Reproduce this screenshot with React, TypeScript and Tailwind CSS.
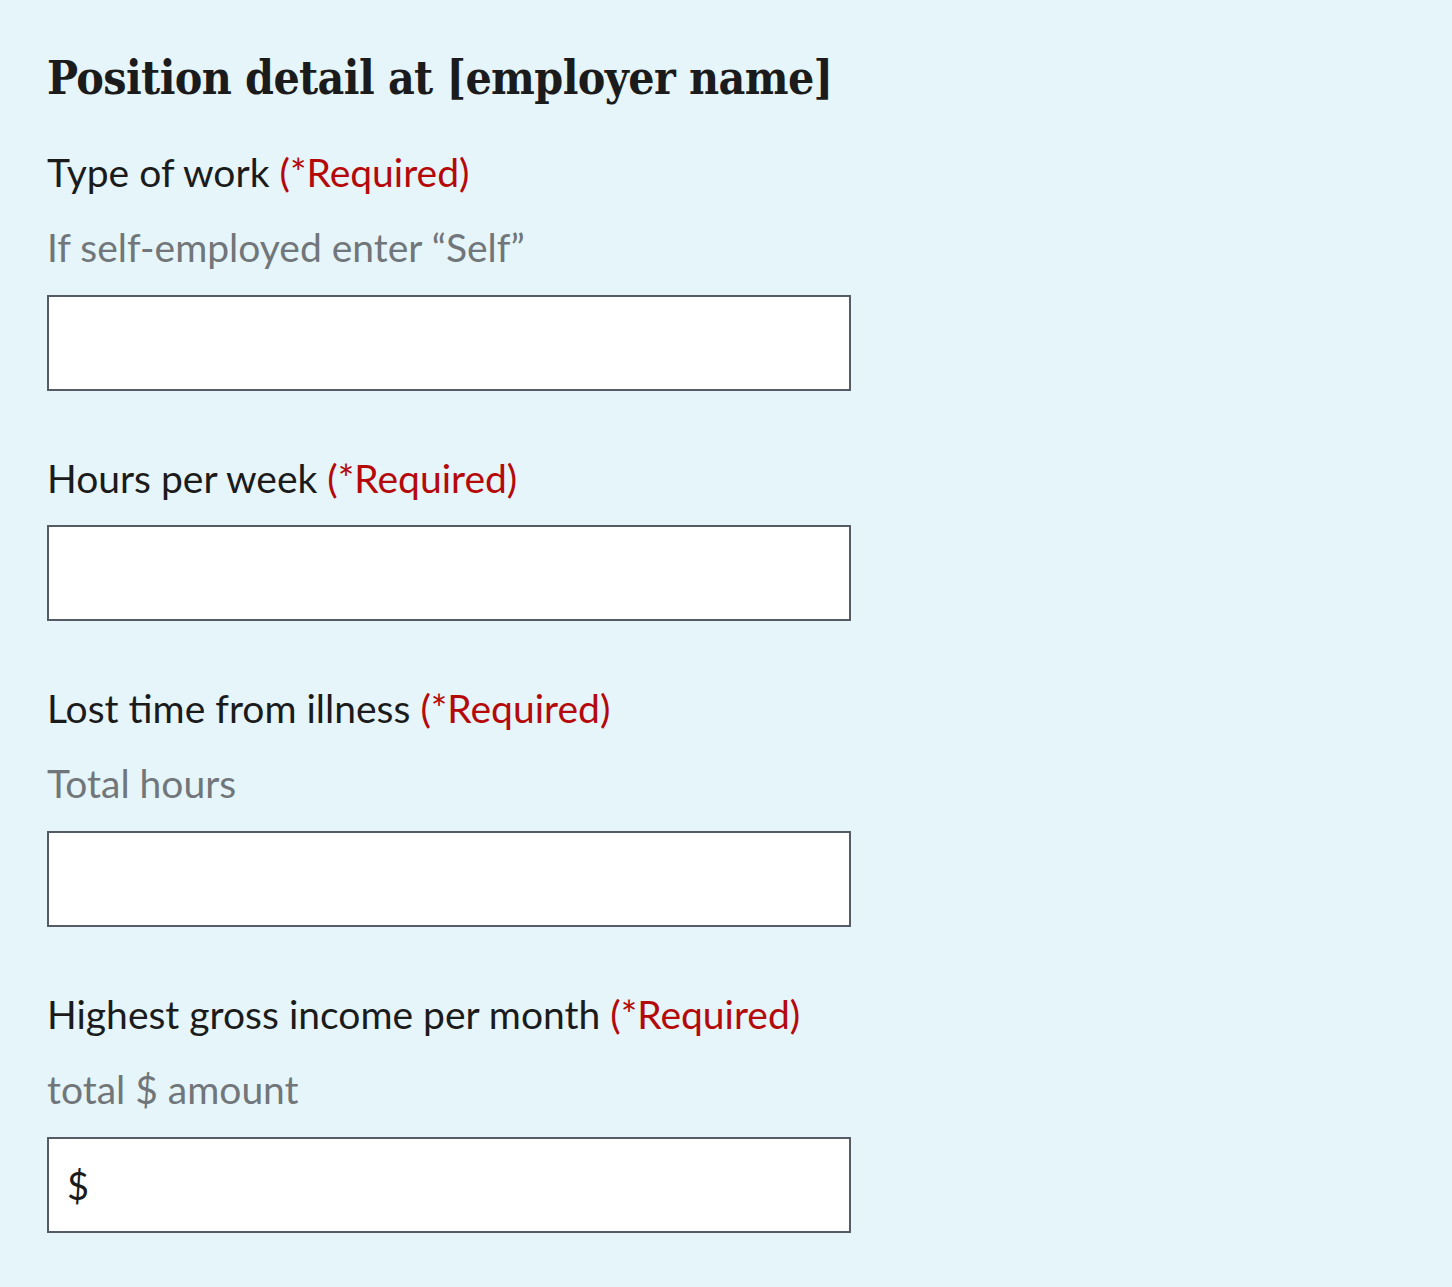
export default function App() {
    const fields = [
        { label: "Type of work", hint: "If self-employed enter \u201cSelf\u201d" },
        { label: "Hours per week" },
        { label: "Lost time from illness", hint: "Total hours" },
        { label: "Highest gross income per month", hint: "total $ amount", prefix: "$" },
    ];

    return (
        <div className="min-h-[1287px] bg-[#e6f5f9] pl-[47px] pt-[50px] font-['Lato','Open_Sans',sans-serif] text-[#1b1b1b]">
            <h1 className="font-['DejaVu_Serif_Condensed','DejaVu_Serif',serif] text-[46px] font-bold leading-[56px] tracking-[-0.6px]">
                Position detail at [employer name]
            </h1>
            {fields.map((f, i) => (
                <div key={i} className={i === 0 ? "mt-[42px]" : "mt-[63px]"}>
                    <div className="text-[39px] leading-[48px]">
                        {f.label} <span className="text-[#b50909]">(*Required)</span>
                    </div>
                    {f.hint && (
                        <div className="mt-[27px] text-[39px] leading-[48px] text-[#71767a]">{f.hint}</div>
                    )}
                    <div className={`${f.hint ? "mt-[24px]" : "mt-[23px]"} flex h-[96px] w-[804px] items-center border-2 border-[#565c65] bg-white px-[18px] text-[38px]`}>
                        {f.prefix}
                    </div>
                </div>
            ))}
        </div>
    );
}
